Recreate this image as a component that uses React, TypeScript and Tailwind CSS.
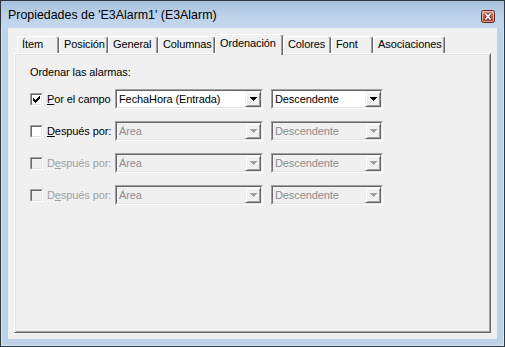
import React from 'react';

type Tab = { label: string; w: string; active?: boolean };

const TABS: Tab[] = [
  { label: 'Ítem', w: 'w-[42px]' },
  { label: 'Posición', w: 'w-[49px]' },
  { label: 'General', w: 'w-[50px]' },
  { label: 'Columnas', w: 'w-[57px]' },
  { label: 'Ordenación', w: 'w-[68px]', active: true },
  { label: 'Colores', w: 'w-[48px]' },
  { label: 'Font', w: 'w-[42px]' },
  { label: 'Asociaciones', w: 'w-[72px]' },
];

function CloseButton() {
  return (
    <svg width="14" height="13" viewBox="0 0 14 13">
      <defs>
        <linearGradient id="closeGrad" x1="0" y1="0" x2="0" y2="1">
          <stop offset="0" stopColor="#e3a79c" />
          <stop offset="0.5" stopColor="#c86a5c" />
          <stop offset="1" stopColor="#a7402f" />
        </linearGradient>
      </defs>
      <rect x="0.5" y="0.5" width="13" height="12" rx="2" fill="url(#closeGrad)" stroke="#6b2820" />
      <rect x="1.5" y="1.5" width="11" height="10" rx="1" fill="none" stroke="#f0c8c0" strokeOpacity="0.6" />
      <path d="M4.5 3.5 L9.5 9.5 M9.5 3.5 L4.5 9.5" stroke="#5b1e18" strokeWidth="3.4" />
      <path d="M4.5 3.5 L9.5 9.5 M9.5 3.5 L4.5 9.5" stroke="#ffffff" strokeWidth="1.8" />
    </svg>
  );
}

function Arrow({ disabled }: { disabled?: boolean }) {
  return (
    <svg width="7" height="4" viewBox="0 0 7 4" shapeRendering="crispEdges">
      <path d="M0 0 H7 L3.5 4 Z" fill={disabled ? '#a0a0a0' : '#000000'} />
    </svg>
  );
}

function Combo({ text, w, disabled }: { text: string; w: string; disabled?: boolean }) {
  return (
    <div className={`${w} h-[20px] border border-t-[#a0a0a0] border-l-[#a0a0a0] border-r-white border-b-white`}>
      <div
        className={`h-full flex border border-t-[#696969] border-l-[#696969] border-r-[#e3e3e3] border-b-[#e3e3e3] ${
          disabled ? 'bg-[#f0f0f0] text-[#8d8d8d]' : 'bg-white text-black'
        }`}
      >
        <span className="flex-1 pl-[2px] leading-[16px] whitespace-nowrap overflow-hidden">{text}</span>
        <div className="w-[16px] h-[16px] flex items-center justify-center bg-[#f0f0f0] border border-t-[#f0f0f0] border-l-[#f0f0f0] border-r-[#696969] border-b-[#696969] shadow-[inset_1px_1px_0_#ffffff,inset_-1px_-1px_0_#a0a0a0]">
          <Arrow disabled={disabled} />
        </div>
      </div>
    </div>
  );
}

function Checkbox({ checked, disabled }: { checked?: boolean; disabled?: boolean }) {
  return (
    <div className="w-[13px] h-[13px] shrink-0 border border-t-[#a0a0a0] border-l-[#a0a0a0] border-r-white border-b-white">
      <div
        className={`w-full h-full flex items-center justify-center border border-t-[#696969] border-l-[#696969] border-r-[#e3e3e3] border-b-[#e3e3e3] ${
          disabled ? 'bg-[#f0f0f0]' : 'bg-white'
        }`}
      >
        {checked && (
          <svg width="7" height="7" viewBox="0 0 7 7" shapeRendering="crispEdges">
            <path d="M6 0 H7 V3 H6 V4 H5 V5 H4 V6 H3 V7 H2 V6 H1 V5 H0 V2 H1 V3 H2 V4 H3 V3 H4 V2 H5 V1 H6 Z" fill="#000" />
          </svg>
        )}
      </div>
    </div>
  );
}

function Row({
  label,
  checked,
  disabled,
  combosDisabled,
  first,
}: {
  label: React.ReactNode;
  checked?: boolean;
  disabled?: boolean;
  combosDisabled?: boolean;
  first: string;
}) {
  return (
    <div className="h-[20px] flex items-center">
      <Checkbox checked={checked} disabled={disabled} />
      <div className={`w-[72px] pl-[4px] leading-[13px] whitespace-nowrap ${disabled ? 'text-[#a0a0a0]' : 'text-black'}`}>
        {label}
      </div>
      <Combo text={first} w="w-[148px]" disabled={combosDisabled} />
      <div className="w-[8px]" />
      <Combo text="Descendente" w="w-[112px]" disabled={combosDisabled} />
    </div>
  );
}

export default function App() {
  return (
    <div className="w-[505px] h-[347px] flex flex-col bg-[#bdd3ea] border border-[#2f393d] shadow-[inset_0_0_0_1px_#d9e6f4] font-['Liberation_Sans',Arial,sans-serif] select-none">
      <div className="h-[27px] shrink-0 flex items-start pl-[7px] pr-[9px] bg-linear-to-b from-[#a6bfdb] via-[#bcd1e9] to-[#c3d7ed]">
        <span className="mt-[7px] text-[12.4px] leading-[15px] text-black whitespace-nowrap">
          Propiedades de 'E3Alarm1' (E3Alarm)
        </span>
        <div className="ml-auto mt-[9px] flex">
          <CloseButton />
        </div>
      </div>
      <div className="flex-1 mx-[7px] mb-[7px] bg-[#f0f0f0] flex flex-col pl-[6px] pr-[6px] pb-[6px] text-[11px] tracking-[-0.1px]">
        <div className="h-[25px] shrink-0 flex items-end pl-[3px]">
          {TABS.map(t =>
            t.active ? (
              <div
                key={t.label}
                className={`${t.w} relative z-10 h-[21px] -mb-[2px] bg-[#f0f0f0] border-l border-t border-r border-l-white border-t-white border-r-[#696969] rounded-t-[3px] shadow-[inset_-1px_0_0_#a0a0a0] pl-[4px] pt-[2px] leading-[13px] whitespace-nowrap text-black`}
              >
                {t.label}
              </div>
            ) : (
              <div
                key={t.label}
                className={`${t.w} h-[17px] bg-[#f0f0f0] border-l border-t border-r border-l-white border-t-white border-r-[#696969] rounded-t-[3px] shadow-[inset_-1px_0_0_#a0a0a0] pl-[4px] pt-[1px] leading-[13px] whitespace-nowrap text-black`}
              >
                {t.label}
              </div>
            ),
          )}
        </div>
        <div className="relative flex-1 flex flex-col pl-[15px] pt-[12px] border border-t-white border-l-white border-r-[#696969] border-b-[#696969] shadow-[inset_1px_1px_0_#e3e3e3,inset_-1px_-1px_0_#a0a0a0]">
          <div className="leading-[13px] text-black">Ordenar las alarmas:</div>
          <div className="mt-[10px] flex flex-col gap-[12px]">
            <Row
              checked
              first="FechaHora (Entrada)"
              label={
                <>
                  <span className="underline">P</span>or el campo
                </>
              }
            />
            <Row
              combosDisabled
              first="Área"
              label={
                <>
                  <span className="underline">D</span>espués por:
                </>
              }
            />
            <Row
              disabled
              combosDisabled
              first="Área"
              label={
                <>
                  D<span className="underline">e</span>spués por:
                </>
              }
            />
            <Row
              disabled
              combosDisabled
              first="Área"
              label={
                <>
                  D<span className="underline">e</span>spués por:
                </>
              }
            />
          </div>
        </div>
      </div>
    </div>
  );
}
